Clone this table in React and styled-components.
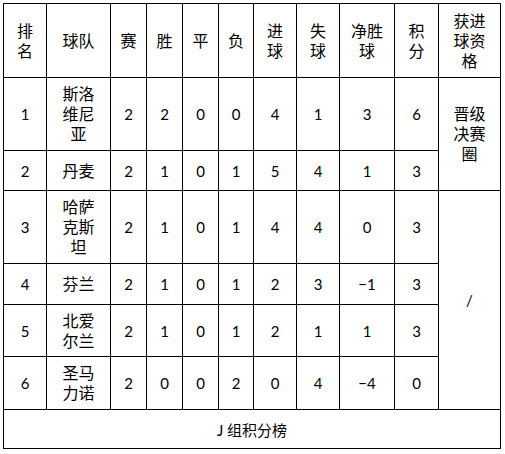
import React from "react";
import styled, { createGlobalStyle } from "styled-components";

const GlobalStyle = createGlobalStyle`
  html, body {
    margin: 0;
    padding: 0;
    background: #ffffff;
  }
`;

const Page = styled.div`
  padding: 3px;
`;

const Table = styled.table`
  border-collapse: collapse;
  table-layout: fixed;
  width: 498px;
  font-family: "Lato", "Noto Sans CJK SC", sans-serif;
  font-size: 15px;
  color: #000;
`;

const Row = styled.tr`
  height: ${p => p.$h}px;
`;

const Cell = styled.td`
  border: 1px solid #000;
  padding: 0 9px;
  text-align: center;
  vertical-align: middle;
  line-height: 20px;
  font-size: ${p => (p.$cjk ? 16 : 15)}px;
  word-break: break-all;
`;

const Caption = styled.td`
  border: 1px solid #000;
  text-align: center;
  vertical-align: middle;
  font-size: 15px;
`;

const widths = [43, 64, 36, 36, 36, 35, 43, 43, 55, 44, 62];
const headers = ["排名", "球队", "赛", "胜", "平", "负", "进球", "失球", "净胜球", "积分", "获进球资格"];

const teams = [
  { h: 73, rank: 1, name: "斯洛维尼亚", nums: [2, 2, 0, 0, 4, 1, "3", 6] },
  { h: 40, rank: 2, name: "丹麦", nums: [2, 1, 0, 1, 5, 4, "1", 3] },
  { h: 73, rank: 3, name: "哈萨克斯坦", nums: [2, 1, 0, 1, 4, 4, "0", 3] },
  { h: 41, rank: 4, name: "芬兰", nums: [2, 1, 0, 1, 2, 3, "−1", 3] },
  { h: 52, rank: 5, name: "北爱尔兰", nums: [2, 1, 0, 1, 2, 1, "1", 3] },
  { h: 53, rank: 6, name: "圣马力诺", nums: [2, 0, 0, 2, 0, 4, "−4", 0] },
];

export default function App() {
  return (
    <Page>
      <GlobalStyle />
      <Table>
        <colgroup>
          {widths.map((w, i) => (
            <col key={i} style={{ width: w }} />
          ))}
        </colgroup>
        <tbody>
          <Row $h={74}>
            {headers.map(h => (
              <Cell key={h} $cjk>
                {h}
              </Cell>
            ))}
          </Row>
          {teams.map((t, i) => (
            <Row key={t.rank} $h={t.h}>
              <Cell>{t.rank}</Cell>
              <Cell $cjk>{t.name}</Cell>
              {t.nums.map((n, j) => (
                <Cell key={j}>{n}</Cell>
              ))}
              {i === 0 && (
                <Cell $cjk rowSpan={2}>
                  晋级决赛圈
                </Cell>
              )}
              {i === 2 && <Cell rowSpan={4}>/</Cell>}
            </Row>
          ))}
          <Row $h={39}>
            <Caption colSpan={11}>J 组积分榜</Caption>
          </Row>
        </tbody>
      </Table>
    </Page>
  );
}
